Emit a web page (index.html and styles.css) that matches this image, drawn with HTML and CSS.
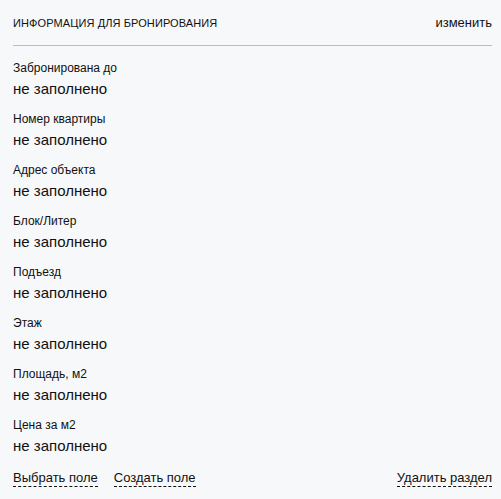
FILE: index.html
```html
<!DOCTYPE html>
<html lang="ru">
<head>
<meta charset="utf-8">
<link rel="stylesheet" href="styles.css">
</head>
<body>
<div class="panel">
  <div class="header">
    <div class="title">ИНФОРМАЦИЯ ДЛЯ БРОНИРОВАНИЯ</div>
    <div class="edit">изменить</div>
  </div>
  <div class="fields">
    <div class="field"><div class="label">Забронирована до</div><div class="value">не заполнено</div></div>
    <div class="field"><div class="label">Номер квартиры</div><div class="value">не заполнено</div></div>
    <div class="field"><div class="label">Адрес объекта</div><div class="value">не заполнено</div></div>
    <div class="field"><div class="label">Блок/Литер</div><div class="value">не заполнено</div></div>
    <div class="field"><div class="label">Подъезд</div><div class="value">не заполнено</div></div>
    <div class="field"><div class="label">Этаж</div><div class="value">не заполнено</div></div>
    <div class="field"><div class="label">Площадь, м2</div><div class="value">не заполнено</div></div>
    <div class="field"><div class="label">Цена за м2</div><div class="value">не заполнено</div></div>
  </div>
  <div class="actions">
    <div class="left">
      <span class="link">Выбрать поле</span>
      <span class="link">Создать поле</span>
    </div>
    <span class="link">Удалить раздел</span>
  </div>
</div>
</body>
</html>
```
FILE: styles.css
```css
html, body {
  margin: 0;
  padding: 0;
  background: #f7f8fa;
}
body {
  font-family: "Liberation Sans", Arial, sans-serif;
  color: #111;
}
.panel {
  padding: 15px 9px 0 13px;
}
.header {
  display: flex;
  justify-content: space-between;
  align-items: baseline;
  padding-bottom: 15px;
  border-bottom: 1px solid #b9bdc1;
}
.title {
  font-size: 11px;
  line-height: 13px;
  letter-spacing: 0.1px;
}
.edit {
  font-size: 13px;
  line-height: 15px;
}
.fields {
  display: flex;
  flex-direction: column;
  gap: 14px;
  padding-top: 15px;
}
.label {
  font-size: 12px;
  line-height: 14px;
}
.value {
  font-size: 15px;
  line-height: 18px;
  margin-top: 5px;
}
.actions {
  display: flex;
  justify-content: space-between;
  padding-top: 15px;
}
.left {
  display: flex;
  gap: 16px;
}
.link {
  font-size: 13px;
  line-height: 16px;
  border-bottom: 1px dashed #111;
}
```
